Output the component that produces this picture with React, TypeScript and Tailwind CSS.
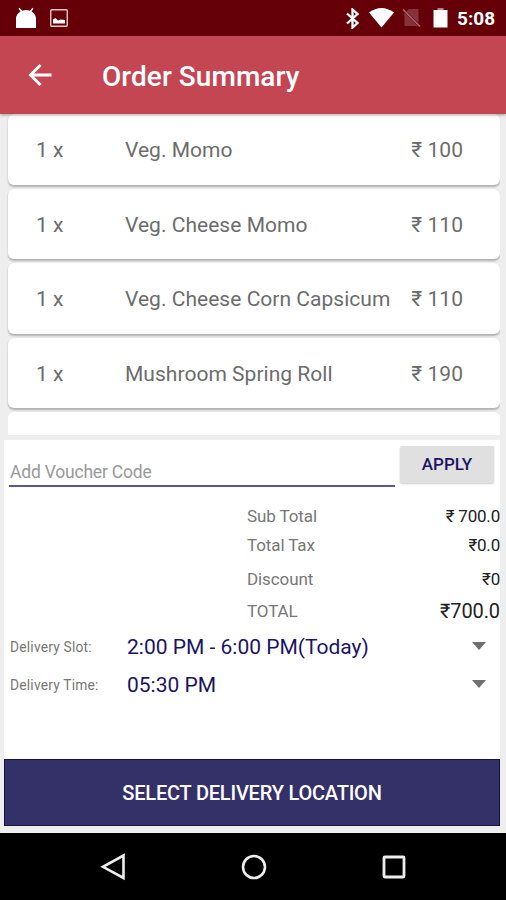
const items = [
  { name: 'Veg. Momo', price: 100 },
  { name: 'Veg. Cheese Momo', price: 110 },
  { name: 'Veg. Cheese Corn Capsicum', price: 110 },
  { name: 'Mushroom Spring Roll', price: 190 },
];

function StatusBar() {
  return (
    <header className="flex h-9 shrink-0 items-center bg-[#650009] text-white">
      <svg className="ml-4 h-6 w-5 shrink-0" viewBox="0 0 20 24" fill="currentColor">
        <path d="M0 22V13Q0 8 4.500 5.500L2.500 2.500l1-.7L6.200 4.800Q10 3.400 13.800 4.800L16.500 1.800l1 .7L15.500 5.500Q20 8 20 13v9Z" />
      </svg>
      <svg className="ml-[14px] h-[18px] w-[18px] shrink-0" viewBox="0 0 18 18">
        <rect x=".75" y=".75" width="16.500" height="16.500" rx="1" fill="none" stroke="#e3c9cb" strokeWidth="1.400" />
        <path d="M3 14.500v-4l2.500-1.500 2.500 2.500 2.500-1L15 11v3.500Z" fill="white" />
      </svg>
      <div className="flex-1" />
      <svg className="h-[21px] w-[13px] shrink-0" viewBox="0 0 13 21" fill="none" stroke="currentColor" strokeWidth="2.300">
        <path d="M1 5.500l10.500 9.500-5 4.500v-18l5 4.500L1 15.500" />
      </svg>
      <svg className="ml-[10px] h-5 w-[25px] shrink-0" viewBox="0 0 25 20" fill="currentColor">
        <path d="M0 4.500Q12.500-4.500 25 4.500L12.500 19.500Z" />
      </svg>
      <svg className="ml-[8px] h-5 w-[19px] shrink-0" viewBox="0 0 19 20">
        <path d="M7 1h9.500v14L4.500 3.500ZM2.500 4.500L15.500 18H2.500Z" fill="#87323a" />
        <path d="M1 1.500L18 18.500" stroke="#a9666b" strokeWidth="1.700" />
      </svg>
      <svg className="ml-[12px] h-5 w-[15px] shrink-0" viewBox="0 0 15 20">
        <path d="M4.500 0h6v2h-6Z" fill="#b98286" />
        <path d="M.5 2h14v17.500H.5Z" fill="white" />
      </svg>
      <span className="mr-[11px] ml-[9px] w-[38px] pt-[2px] text-[19px] leading-6 font-bold whitespace-nowrap">5:08</span>
    </header>
  );
}

function AppBar() {
  return (
    <div className="z-10 flex h-[78px] shrink-0 items-center bg-[#c44652] pt-[3px] text-white shadow-[0_1px_3px_rgba(0,0,0,0.35)]">
      <svg className="mb-[4px] ml-[28px] h-[22px] w-6 shrink-0" viewBox="0 0 24 22" fill="none" stroke="currentColor" strokeWidth="2.900">
        <path d="M23.500 11H3M12.500 1L2.500 11l10 10" />
      </svg>
      <h1 className="ml-[50px] pt-px text-[28px] leading-9 font-medium tracking-[0.05px]">Order Summary</h1>
    </div>
  );
}

function OrderRow({ name, price }: { name: string; price: number }) {
  return (
    <li className="flex h-[70.600px] shrink-0 items-center rounded-[6px] bg-white pt-[3px] pr-[37px] pl-[28px] text-[21px] tracking-[0.03px] text-[#6c6c6c] shadow-[0_1.500px_2px_rgba(0,0,0,0.26)]">
      <span className="w-[89px]">1 x</span>
      <span className="flex-1 whitespace-nowrap">{name}</span>
      <span className="tracking-[0.05px] whitespace-nowrap">₹ {price}</span>
    </li>
  );
}

function Dropdown({ label, value }: { label: string; value: string }) {
  return (
    <div className="flex h-[38px] shrink-0 items-center pr-[14px] pl-[6px]">
      <span className="w-[117px] pt-[3px] text-[13.800px] tracking-[0.2px] text-[#777]">{label}</span>
      <span className="flex-1 pt-[4px] text-[21px] text-[#1b1464]">{value}</span>
      <svg className="h-2 w-[14px]" viewBox="0 0 14 8" fill="#6f6f6f">
        <path d="M0 0h14L7 8Z" />
      </svg>
    </div>
  );
}

export default function App() {
  return (
    <div className="flex h-[900px] w-[506px] flex-col overflow-hidden bg-[#eee] font-[Roboto,'Noto_Sans',sans-serif]">
      <StatusBar />
      <AppBar />
      <ul className="mr-[6px] flex h-[321px] shrink-0 flex-col gap-[4px] overflow-hidden pl-[8px]">
        {items.map((item) => (
          <OrderRow key={item.name} {...item} />
        ))}
        <li className="h-[71px] shrink-0 rounded-[6px] bg-white" />
      </ul>
      <main className="mt-[5px] mr-[6px] ml-[4px] flex h-[319px] shrink-0 flex-col bg-white">
        <div className="flex h-[54px] shrink-0">
          <div className="ml-[5px] flex h-[47px] w-[386px] items-end border-b-2 border-[#5c588c] pl-px text-[17.500px] tracking-[-0.2px] text-[#999]">
            Add Voucher Code
          </div>
          <button className="mt-[6px] ml-[5px] h-[37px] w-[94px] rounded-[2px] bg-[#e0e0e0] text-[17px] font-medium text-[#1b1464] shadow-[0_1px_2px_rgba(0,0,0,0.2)]">
            APPLY
          </button>
        </div>
        <dl className="ml-[243px] grid shrink-0 grid-cols-[1fr_auto] grid-rows-[28px_30px_37px_28px] items-center pt-[9px] pb-px text-[17px] tracking-[-0.1px] text-[#777]">
          <dt>Sub Total</dt>
          <dd className="text-right tracking-[-0.2px] text-[#222]">₹ 700.0</dd>
          <dt>Total Tax</dt>
          <dd className="text-right tracking-[-0.2px] text-[#222]">₹0.0</dd>
          <dt>Discount</dt>
          <dd className="text-right tracking-[-0.2px] text-[#222]">₹0</dd>
          <dt>TOTAL</dt>
          <dd className="pb-[2px] text-right text-[20px] tracking-[-0.1px] text-[#222]">₹700.0</dd>
        </dl>
        <Dropdown label="Delivery Slot:" value="2:00 PM - 6:00 PM(Today)" />
        <Dropdown label="Delivery Time:" value="05:30 PM" />
      </main>
      <button className="mr-[6px] ml-[4px] h-[67px] shrink-0 border border-[#17104f] bg-[#343168] pt-px text-[20px] font-medium tracking-[-0.2px] text-white">
        SELECT DELIVERY LOCATION
      </button>
      <div className="h-[7px] shrink-0" />
      <nav className="flex flex-1 items-center bg-black pl-[100px]">
        <svg className="h-[28px] w-[26px]" viewBox="0 0 26 28" fill="none" stroke="#eee" strokeWidth="2.600">
          <path d="M23.500 2.500v22.500L3 13.800Z" />
        </svg>
        <svg className="ml-[114px] h-[28px] w-[28px]" viewBox="0 0 28 28" fill="none" stroke="#eee" strokeWidth="2.600">
          <circle cx="14" cy="14" r="11" />
        </svg>
        <svg className="ml-[112px] h-[28px] w-[28px]" viewBox="0 0 28 28" fill="none" stroke="#eee" strokeWidth="2.800">
          <rect x="4" y="4" width="20" height="20" rx="1" />
        </svg>
      </nav>
    </div>
  );
}
